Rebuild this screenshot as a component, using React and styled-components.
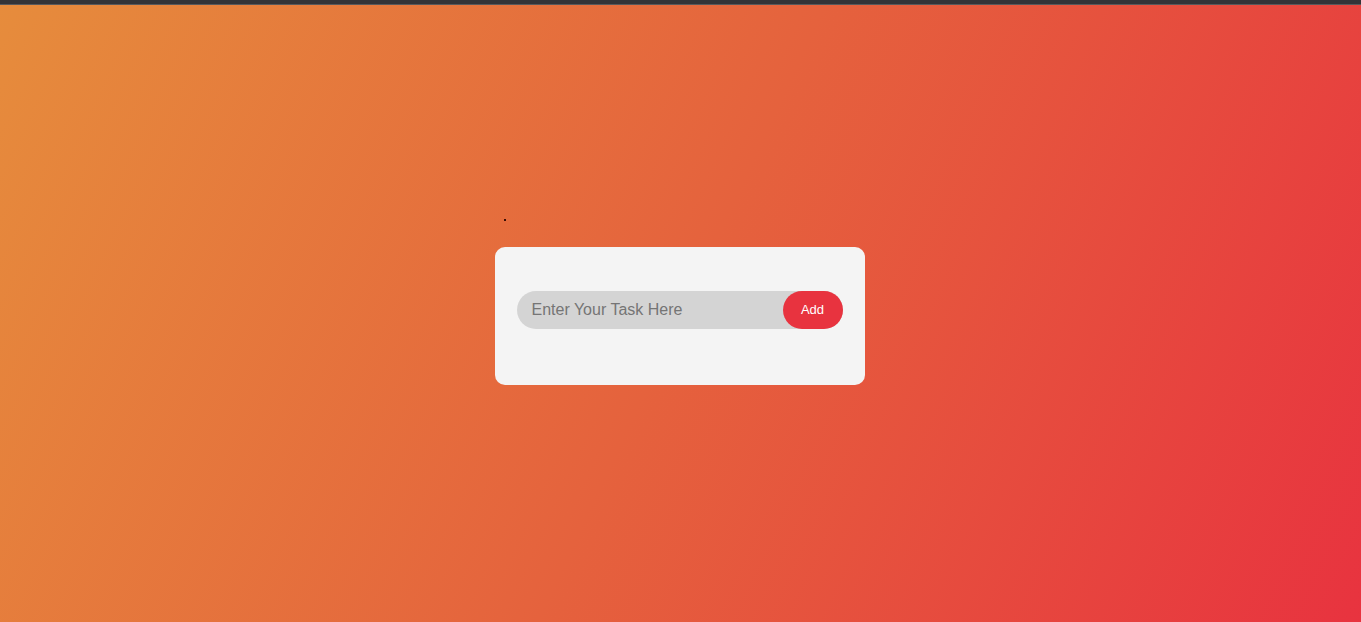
import React, {useState} from 'react';
import styled, {createGlobalStyle} from "styled-components";

const GlobalStyle = createGlobalStyle`
  html, body {
    margin: 0;
    padding: 0;
    height: 100%;
  }

  body {
    font-family: "Liberation Sans", Arial, sans-serif;
  }

  #root {
    height: 100%;
    display: flex;
    flex-direction: column;
  }
`

const TopBar = styled.div`
  height: 4px;
  background-color: #333438;
  border-bottom: 1px solid #58595c;
  flex-shrink: 0;
`

const Page = styled.main`
  flex: 1;
  display: flex;
  align-items: center;
  justify-content: center;
  background: linear-gradient(115deg, #e68c3c 0%, #e5623d 50%, #e8333f 100%);
`

const Wrapper = styled.div`
  display: flex;
  flex-direction: column;
  padding: 0 2px 24px 0;
`

const Dot = styled.span`
  width: 2px;
  height: 2px;
  margin: 0 0 26px 9px;
  background-color: #3a0d05;
`

const Card = styled.div`
  width: 370px;
  height: 138px;
  box-sizing: border-box;
  padding: 44px 22px;
  background-color: #f4f4f4;
  border-radius: 10px;
`

const Row = styled.form`
  display: flex;
  align-items: center;
  height: 38px;
  background-color: #d4d4d4;
  border-radius: 30px;
`

const TaskInput = styled.input`
  flex: 1;
  min-width: 0;
  height: 100%;
  border: none;
  outline: none;
  background: transparent;
  padding: 0 15px;
  font-family: "Liberation Sans", Arial, sans-serif;
  font-size: 16px;
  color: #333;

  &::placeholder {
    color: #757575;
  }
`

const AddButton = styled.button`
  width: 60px;
  height: 38px;
  border: none;
  border-radius: 40px;
  background-color: #e8333f;
  color: #fff;
  font-family: "Liberation Sans", Arial, sans-serif;
  font-size: 13px;
  cursor: pointer;
`

const App = () => {
    const [task, setTask] = useState("");

    const handleSubmit = (e) => {
        e.preventDefault();
        setTask("");
    }

    return (
        <>
            <GlobalStyle/>
            <TopBar/>
            <Page>
                <Wrapper>
                    <Dot/>
                    <Card>
                        <Row onSubmit={handleSubmit}>
                            <TaskInput
                                placeholder="Enter Your Task Here"
                                value={task}
                                onChange={e => setTask(e.target.value)}
                            />
                            <AddButton type="submit">Add</AddButton>
                        </Row>
                    </Card>
                </Wrapper>
            </Page>
        </>
    );
};

export default App;
